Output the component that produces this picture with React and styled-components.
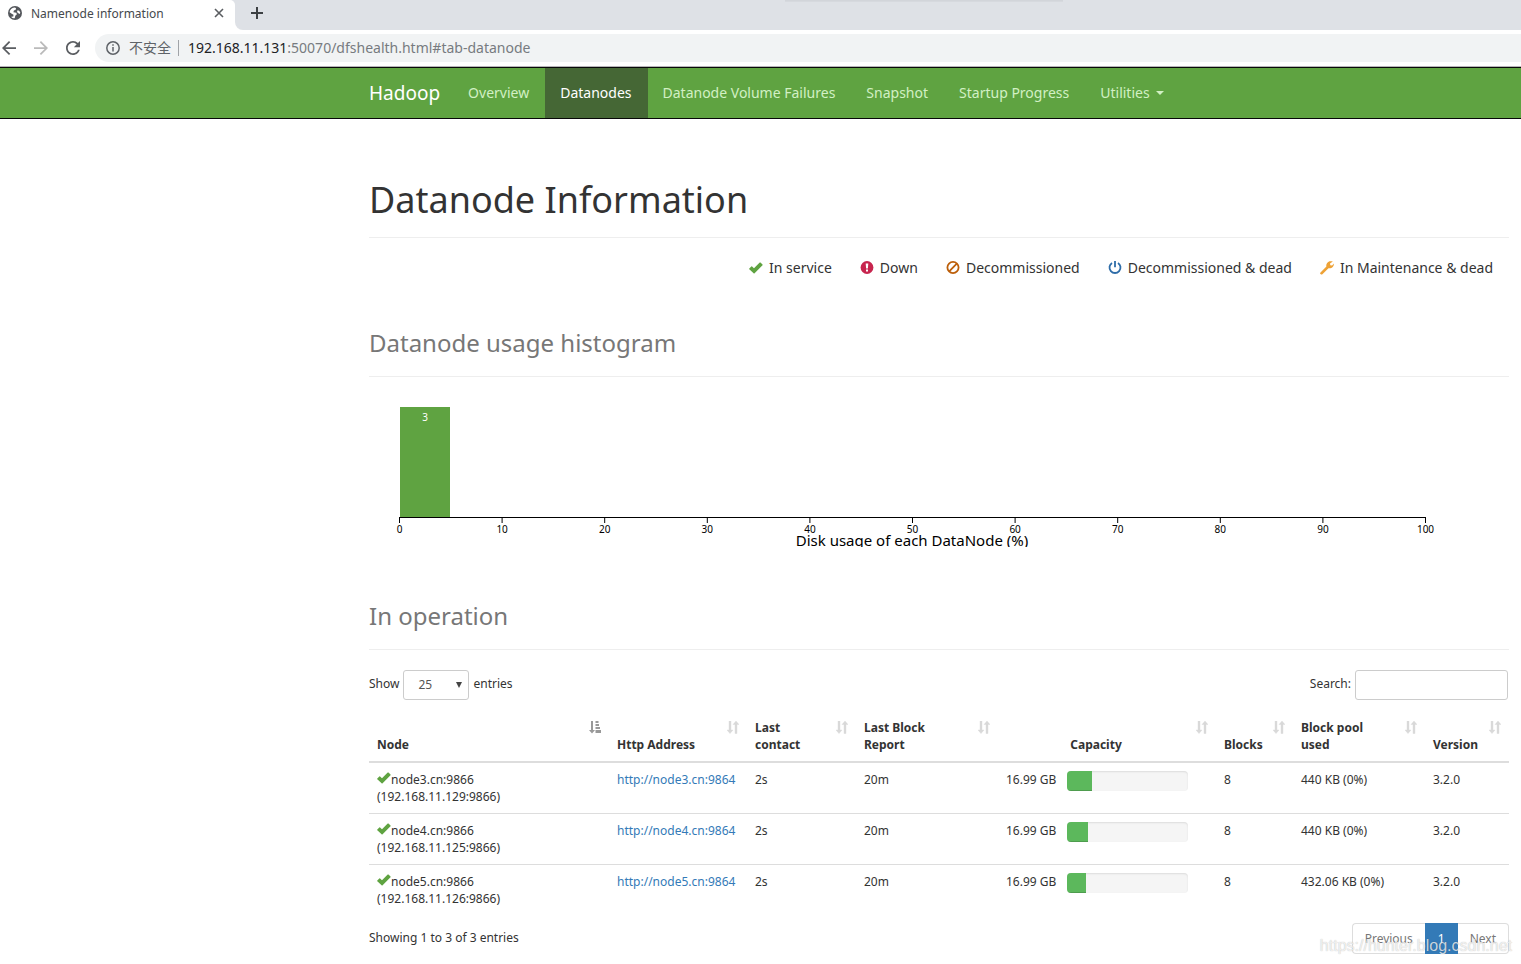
import React, { useState } from 'react'
import styled, { createGlobalStyle } from 'styled-components'

const GlobalStyle = createGlobalStyle`
  * {
    box-sizing: border-box;
  }
  body {
    margin: 0;
    background-color: white;
    color: #333;
    font-family: "Noto Sans", "Noto Sans CJK SC", sans-serif;
    font-size: 12px;
    line-height: 17px;
  }
  button, input, select {
    font: inherit;
  }
`;

/* browser window */

const TabStrip = styled.div`
  display: flex;
  height: 30px;
  background-color: #dee1e6;
`;
const BrowserTab = styled.div`
  display: flex;
  align-items: center;
  width: 235px;
  padding: 0 10px 4px 7px;
  background-color: white;
  color: #45494d;
  border-top-right-radius: 5px;
`;
const TabTitle = styled.span`
  flex: 1;
  margin-left: 8px;
`;
const StripBack = styled.div`
  flex: 1;
  display: flex;
  background: linear-gradient(to right, white 10px, #dee1e6 10px);
`;
const StripRest = styled.div`
  flex: 1;
  display: flex;
  align-items: center;
  padding: 0 0 4px 15px;
  background: linear-gradient(#d0d3d8, #d8dbe0) 550px 0 / 278px 2px no-repeat #dee1e6;
  border-bottom-left-radius: 8px;
`;
const IconButton = styled.button`
  display: flex;
  padding: 0;
  border: none;
  background: none;
  color: ${props => props.$faded ? '#bababa' : '#5a5d61'};
  cursor: pointer;
`;
const Toolbar = styled.div`
  display: flex;
  align-items: center;
  gap: 18px;
  height: 37px;
  padding-left: 2px;
  border-bottom: 1px solid #b6b4b7;
`;
const AddressBar = styled.div`
  flex: 1;
  display: flex;
  align-items: center;
  height: 28px;
  margin-left: -3px;
  padding-left: 11px;
  background-color: #f1f3f4;
  border-radius: 14px 0 0 14px;
  color: #5f6368;
  font-size: 14px;
`;
const NotSecure = styled.span`
  margin-left: 9px;
  padding-right: 7px;
  border-right: 1px solid #a0a3a7;
  line-height: 16px;
`;
const Address = styled.div`
  margin-left: 9px;
  padding-bottom: 2px;
  color: #777b80;
`;
const Host = styled.span`
  color: #202124;
`;

/* page header */

const NavBar = styled.nav`
  background-color: #5fa341;
  border-top: 1px solid #080808;
  border-bottom: 1px solid #080808;
`;
const Container = styled.div`
  max-width: 1140px;
  margin: 0 12px 0 auto;
`;
const NavList = styled(Container)`
  display: flex;
  height: 50px;
`;
const Brand = styled.a`
  padding: 15px 13px 15px 0;
  color: white;
  font-size: 19px;
  line-height: 20px;
  text-decoration: none;
`;
const NavLink = styled.a`
  display: flex;
  align-items: center;
  padding: 0 16px 0 15px;
  font-size: 14px;
  line-height: 20px;
  text-decoration: none;
  color: ${props => props.$active ? 'white' : '#d2f0c4'};
  background-color: ${props => props.$active ? '#456735' : 'transparent'};
`;
const Caret = styled.span`
  margin-left: 6px;
  border-top: 4px solid;
  border-left: 4px solid transparent;
  border-right: 4px solid transparent;
`;

/* page content */

const PageTitle = styled.h1`
  margin: 50px 0 20px;
  padding: 9px 0 15px;
  border-bottom: 1px solid #eee;
  font-size: 36px;
  font-weight: 400;
  line-height: 44px;
`;
const SectionTitle = styled.h2`
  margin: 0;
  padding-bottom: 17px;
  border-bottom: 1px solid #eee;
  color: #777;
  font-size: 24px;
  font-weight: 400;
  line-height: 32px;
`;
const Legend = styled.ul`
  display: flex;
  justify-content: flex-end;
  gap: 28px;
  margin: 0 0 49px;
  padding: 0 16px 0 0;
  list-style: none;
  font-size: 14px;
  line-height: 20px;
`;
const LegendItem = styled.li`
  display: flex;
  align-items: center;
  gap: 6px;
`;
const Chart = styled.svg`
  display: block;
  width: 100%;
  height: 150px;
  margin: 20px 0 53px;
  overflow: hidden;
  font-size: 10px;
`;
const TableControls = styled.div`
  display: flex;
  justify-content: space-between;
  margin: 20px 1px 11px 0;
`;
const ControlLabel = styled.label`
  display: flex;
  gap: 4px;
  line-height: 28px;
`;
const SelectBox = styled.span`
  display: grid;
  align-items: center;
  width: 66px;
  height: 30px;
`;
const Select = styled.select`
  grid-area: 1 / 1;
  width: 100%;
  height: 30px;
  padding: 0 14px;
  appearance: none;
  border: 1px solid #ccc;
  border-radius: 3px;
  background-color: white;
  color: #555;
`;
const SelectArrow = styled.svg`
  grid-area: 1 / 1;
  justify-self: end;
  margin-right: 6px;
  pointer-events: none;
`;
const SearchInput = styled.input`
  width: 153px;
  height: 30px;
  padding: 5px 10px;
  border: 1px solid #ccc;
  border-radius: 3px;
`;
const Table = styled.table`
  width: 100%;
  table-layout: fixed;
  border-collapse: separate;
  border-spacing: 0;
`;
const Col = styled.col`
  width: ${props => props.$width};
`;
const Th = styled.th`
  padding: 8px;
  border-bottom: 2px solid #ddd;
  text-align: left;
  vertical-align: bottom;
`;
const ThInner = styled.div`
  display: flex;
  justify-content: space-between;
  align-items: flex-end;
  height: 34px;
`;
const ThLabel = styled.span`
  flex: 1;
  white-space: pre-line;
  text-align: ${props => props.$center ? 'center' : 'left'};
`;
const SortButton = styled.button`
  display: flex;
  align-self: flex-start;
  margin-top: 2px;
  margin-left: 10px;
  padding: 0;
  border: none;
  background: none;
  color: ${props => props.$sorted ? '#999' : '#d9d9d9'};
  cursor: pointer;
`;
const Row = styled.tr`
  & + & > td {
    border-top: 1px solid #ddd;
  }
`;
const Td = styled.td`
  padding: 8px;
  vertical-align: top;
`;
const NodeName = styled.div`
  display: flex;
`;
const Link = styled.a`
  color: #337ab7;
  text-decoration: none;
`;
const Capacity = styled.div`
  display: flex;
  gap: 11px;
  height: 17px;
  padding-right: 20px;
`;
const CapacityText = styled.span`
  width: 50px;
  white-space: nowrap;
  text-align: right;
`;
const Progress = styled.div`
  flex: 1;
  height: 20px;
  overflow: hidden;
  border-radius: 4px;
  background-color: #f5f5f5;
  box-shadow: inset 0 1px 2px rgba(0, 0, 0, 0.1);
`;
const ProgressBar = styled.div`
  height: 100%;
  background-color: #5cb85c;
  box-shadow: inset 0 -1px 0 rgba(0, 0, 0, 0.15);
`;
const TableFooter = styled.div`
  display: flex;
  justify-content: space-between;
  padding: 8px 0 10px;
`;
const Info = styled.div`
  padding-top: 6px;
`;
const Pagination = styled.div`
  display: flex;
`;
const PageButton = styled.button`
  height: 31px;
  padding: 0 12px;
  border: 1px solid ${props => props.$active ? '#337ab7' : '#ddd'};
  border-left-width: ${props => props.$last ? '0' : '1px'};
  border-right-width: ${props => props.$first ? '0' : '1px'};
  border-radius: ${props => props.$first ? '4px 0 0 4px' : props.$last ? '0 4px 4px 0' : '0'};
  background-color: ${props => props.$active ? '#337ab7' : 'white'};
  color: ${props => props.$active ? 'white' : '#777'};
`;
const Watermark = styled.div`
  position: absolute;
  right: 9px;
  top: 936px;
  color: rgba(255, 255, 255, 0.75);
  font-family: "Liberation Sans", sans-serif;
  font-size: 16px;
  line-height: 20px;
  text-shadow: 0 0 1px rgba(0, 0, 0, 0.3);
  pointer-events: none;
`;

/* icons */

const CheckIcon = () => (
  <svg width="14" height="14" viewBox="0 0 14 14">
    <path fill="#5fa341" d="M.3 7.5 2.3 5.500a.6.6 0 0 1 .8 0L5 7.300 10.700 1.600a.6.6 0 0 1 .8 0l2 1.900a.6.6 0 0 1 0 .8L5.600 12.200a.7.7 0 0 1-1 0L.3 8.300a.6.6 0 0 1 0-.8z" />
  </svg>
)
const DownIcon = () => (
  <svg width="14" height="14" viewBox="0 0 14 14">
    <circle cx="7" cy="6.5" r="6.4" fill="#c7254e" />
    <path fill="white" d="M5.700 2.400h2.600L7.900 7.400H6.100zM6 8.400h2v2H6z" />
  </svg>
)
const BanIcon = () => (
  <svg width="14" height="14" viewBox="0 0 14 14" fill="none" stroke="#bc5f0a" strokeWidth="1.8">
    <circle cx="7" cy="6.5" r="5.6" />
    <path d="M3.200 10.300 10.800 2.700" />
  </svg>
)
const PowerIcon = () => (
  <svg width="14" height="14" viewBox="0 0 14 14" fill="none" stroke="#2d6ca8" strokeWidth="1.8">
    <path d="M4 1.900a5.500 5.500 0 1 0 6 0M7 0v6.200" />
  </svg>
)
const WrenchIcon = () => (
  <svg width="14" height="14" viewBox="0 0 14 14">
    <path fill="#eea236" d="M.5 11.400 6.400 5.600C5.800 3.400 7.200 1 9.500.3 10.800 0 12 .1 12.800.5L10 2.400l.3 1.800 1.800.3 1.800-1.900c.2 2.200-1.300 4.200-3.400 4.600-.7.2-1.400.1-2 0L2.400 13.200a1.100 1.100 0 0 1-1.600 0l-.3-.3a1 1 0 0 1 0-1.500z" />
  </svg>
)
const SortIcon = () => (
  <svg width="12" height="13" viewBox="0 0 12 13" fill="currentColor">
    <path d="M2 0h2v9h2L3 12.500 0 9h2zM8 12.500h2v-9h2L9 0 6 3.500h2z" stroke="currentColor" strokeWidth=".4" />
  </svg>
)
const SortedIcon = () => (
  <svg width="12" height="13" viewBox="0 0 12 13" fill="currentColor">
    <path d="M2 0h2v9h2L3 12.500 0 9h2zM6.500 0h3v2h-3zM6.500 3h3.500v2H6.500zM6.500 6h4.500v2H6.500zM6.500 9H12v3H6.500z" />
  </svg>
)
const GlobeIcon = () => (
  <svg width="16" height="16" viewBox="0 0 16 16">
    <circle cx="8" cy="8" r="7" fill="#54575c" />
    <path fill="white" d="M2.600 7.200C2.800 4.700 4.900 2.700 7.400 2.500L9 3 8.700 4.700 6.900 5.500 6.400 7.200 9.300 7.700 9.900 9.200 8.300 10.700 7.700 13.300C6 13.300 4.800 12.600 4.200 11.700L6.300 11.500 6.500 9.700 4.700 8.700zM10.500 5.200 12.200 5.700 13.300 7.600 12.800 9 11.300 8.300 10 7z" />
  </svg>
)
const CloseIcon = () => (
  <svg width="12" height="12" viewBox="0 0 12 12" stroke="currentColor" strokeWidth="1.6">
    <path d="M2 2l8 8M10 2l-8 8" />
  </svg>
)
const PlusIcon = () => (
  <svg width="14" height="14" viewBox="0 0 14 14" stroke="#3c4043" strokeWidth="2">
    <path d="M7 1v12M1 7h12" />
  </svg>
)
const BackIcon = () => (
  <svg width="14" height="14" viewBox="4 4 16 16" fill="currentColor">
    <path d="M20 11H7.830l5.590-5.590L12 4l-8 8 8 8 1.410-1.410L7.830 13H20v-2z" />
  </svg>
)
const ForwardIcon = () => (
  <svg width="14" height="14" viewBox="4 4 16 16" fill="currentColor">
    <path d="M12 4l-1.410 1.410L16.170 11H4v2h12.170l-5.580 5.590L12 20l8-8z" />
  </svg>
)
const ReloadIcon = () => (
  <svg width="14" height="14" viewBox="4 4 16 16" fill="currentColor">
    <path d="M17.650 6.350C16.200 4.900 14.210 4 12 4c-4.420 0-7.990 3.580-7.990 8s3.570 8 7.990 8c3.730 0 6.840-2.550 7.730-6h-2.080c-.82 2.330-3.040 4-5.650 4-3.310 0-6-2.690-6-6s2.690-6 6-6c1.660 0 3.140.69 4.220 1.780L13 11h7V4l-2.350 2.350z" />
  </svg>
)
const InfoIcon = () => (
  <svg width="14" height="14" viewBox="0 0 14 14" fill="none" stroke="#5f6368" strokeWidth="1.5">
    <circle cx="7" cy="7" r="6.200" />
    <path d="M7 6v4.500M7 3.300v1.500" />
  </svg>
)

const navItems = ['Overview', 'Datanodes', 'Datanode Volume Failures', 'Snapshot', 'Startup Progress', 'Utilities']

const legend = [
  { icon: <CheckIcon />, text: 'In service' },
  { icon: <DownIcon />, text: 'Down' },
  { icon: <BanIcon />, text: 'Decommissioned' },
  { icon: <PowerIcon />, text: 'Decommissioned & dead' },
  { icon: <WrenchIcon />, text: 'In Maintenance & dead' },
]

const columns = [
  { title: 'Node', width: '240px', sorted: true },
  { title: 'Http Address', width: '138px' },
  { title: 'Last\ncontact', width: '109px' },
  { title: 'Last Block\nReport', width: '142px' },
  { title: 'Capacity', width: '218px', center: true },
  { title: 'Blocks', width: '77px' },
  { title: 'Block pool\nused', width: '132px' },
  { title: 'Version', width: '84px' },
]

const nodes = [
  { name: 'node3.cn', ip: '192.168.11.129', used: 21, pool: '440 KB (0%)' },
  { name: 'node4.cn', ip: '192.168.11.125', used: 17, pool: '440 KB (0%)' },
  { name: 'node5.cn', ip: '192.168.11.126', used: 16, pool: '432.06 KB (0%)' },
]

const ticks = [0, 10, 20, 30, 40, 50, 60, 70, 80, 90, 100]

const Histogram = () => (
  <Chart role="img" aria-label="Datanode usage histogram">
    <rect x="31" y="10" width="50" height="110" fill="#5fa341" />
    <text x="56" y="24" textAnchor="middle" fill="white">3</text>
    <path d="M30.500 126v-5.500h1026v5.500" fill="none" stroke="black" />
    {ticks.map(tick => (
      <g key={tick} transform={`translate(${30.5 + tick * 10.26}, 120)`}>
        <path d="M0 0v6" stroke="black" />
        <text y="16" textAnchor="middle">{tick}</text>
      </g>
    ))}
    <text x="543" y="149" textAnchor="middle" fontSize="15">Disk usage of each DataNode (%)</text>
  </Chart>
)

const Browser = () => (
  <header>
    <TabStrip>
      <BrowserTab>
        <GlobeIcon />
        <TabTitle>Namenode information</TabTitle>
        <IconButton aria-label="Close tab"><CloseIcon /></IconButton>
      </BrowserTab>
      <StripBack>
        <StripRest>
          <IconButton aria-label="New tab"><PlusIcon /></IconButton>
        </StripRest>
      </StripBack>
    </TabStrip>
    <Toolbar>
      <IconButton aria-label="Back"><BackIcon /></IconButton>
      <IconButton aria-label="Forward" $faded><ForwardIcon /></IconButton>
      <IconButton aria-label="Reload"><ReloadIcon /></IconButton>
      <AddressBar>
        <InfoIcon />
        <NotSecure>不安全</NotSecure>
        <Address><Host>192.168.11.131</Host>:50070/dfshealth.html#tab-datanode</Address>
      </AddressBar>
    </Toolbar>
  </header>
)

const NodeRow = ({ node }) => (
  <Row>
    <Td>
      <NodeName><CheckIcon />{node.name}:9866</NodeName>
      ({node.ip}:9866)
    </Td>
    <Td><Link href="#node">http://{node.name}:9864</Link></Td>
    <Td>2s</Td>
    <Td>20m</Td>
    <Td>
      <Capacity>
        <CapacityText>16.99 GB</CapacityText>
        <Progress><ProgressBar style={{ width: `${node.used}%` }} /></Progress>
      </Capacity>
    </Td>
    <Td>8</Td>
    <Td>{node.pool}</Td>
    <Td>3.2.0</Td>
  </Row>
)

const App = () => {
  const [size, setSize] = useState('25')
  const [search, setSearch] = useState('')
  const shown = nodes.filter(node => node.name.includes(search))

  return (
    <>
      <GlobalStyle />
      <Browser />
      <NavBar>
        <NavList>
          <Brand href="#top">Hadoop</Brand>
          {navItems.map(item => (
            <NavLink key={item} href="#tab" $active={item === 'Datanodes'}>
              {item}
              {item === 'Utilities' && <Caret />}
            </NavLink>
          ))}
        </NavList>
      </NavBar>
      <Container as="main">
        <PageTitle>Datanode Information</PageTitle>
        <Legend>
          {legend.map(item => (
            <LegendItem key={item.text}>{item.icon}{item.text}</LegendItem>
          ))}
        </Legend>
        <SectionTitle>Datanode usage histogram</SectionTitle>
        <Histogram />
        <SectionTitle>In operation</SectionTitle>
        <TableControls>
          <ControlLabel>
            Show
            <SelectBox>
              <Select value={size} onChange={e => setSize(e.target.value)}>
                <option>25</option>
                <option>50</option>
                <option>100</option>
              </Select>
              <SelectArrow width="8" height="8" viewBox="0 0 8 8"><path d="M1 1h6L4 7z" fill="#444" /></SelectArrow>
            </SelectBox>
            entries
          </ControlLabel>
          <ControlLabel>
            Search:
            <SearchInput type="search" value={search} onChange={e => setSearch(e.target.value)} />
          </ControlLabel>
        </TableControls>
        <Table>
          <colgroup>
            {columns.map(col => <Col key={col.title} $width={col.width} />)}
          </colgroup>
          <thead>
            <tr>
              {columns.map(col => (
                <Th key={col.title}>
                  <ThInner>
                    <ThLabel $center={col.center}>{col.title}</ThLabel>
                    <SortButton aria-label={`Sort by ${col.title}`} $sorted={col.sorted}>
                      {col.sorted ? <SortedIcon /> : <SortIcon />}
                    </SortButton>
                  </ThInner>
                </Th>
              ))}
            </tr>
          </thead>
          <tbody>
            {shown.map(node => <NodeRow key={node.name} node={node} />)}
          </tbody>
        </Table>
        <TableFooter>
          <Info>Showing 1 to 3 of 3 entries</Info>
          <Pagination>
            <PageButton $first>Previous</PageButton>
            <PageButton $active>1</PageButton>
            <PageButton $last>Next</PageButton>
          </Pagination>
        </TableFooter>
      </Container>
      <Watermark>https://hunter.blog.csdn.net</Watermark>
    </>
  )
}

export default App
